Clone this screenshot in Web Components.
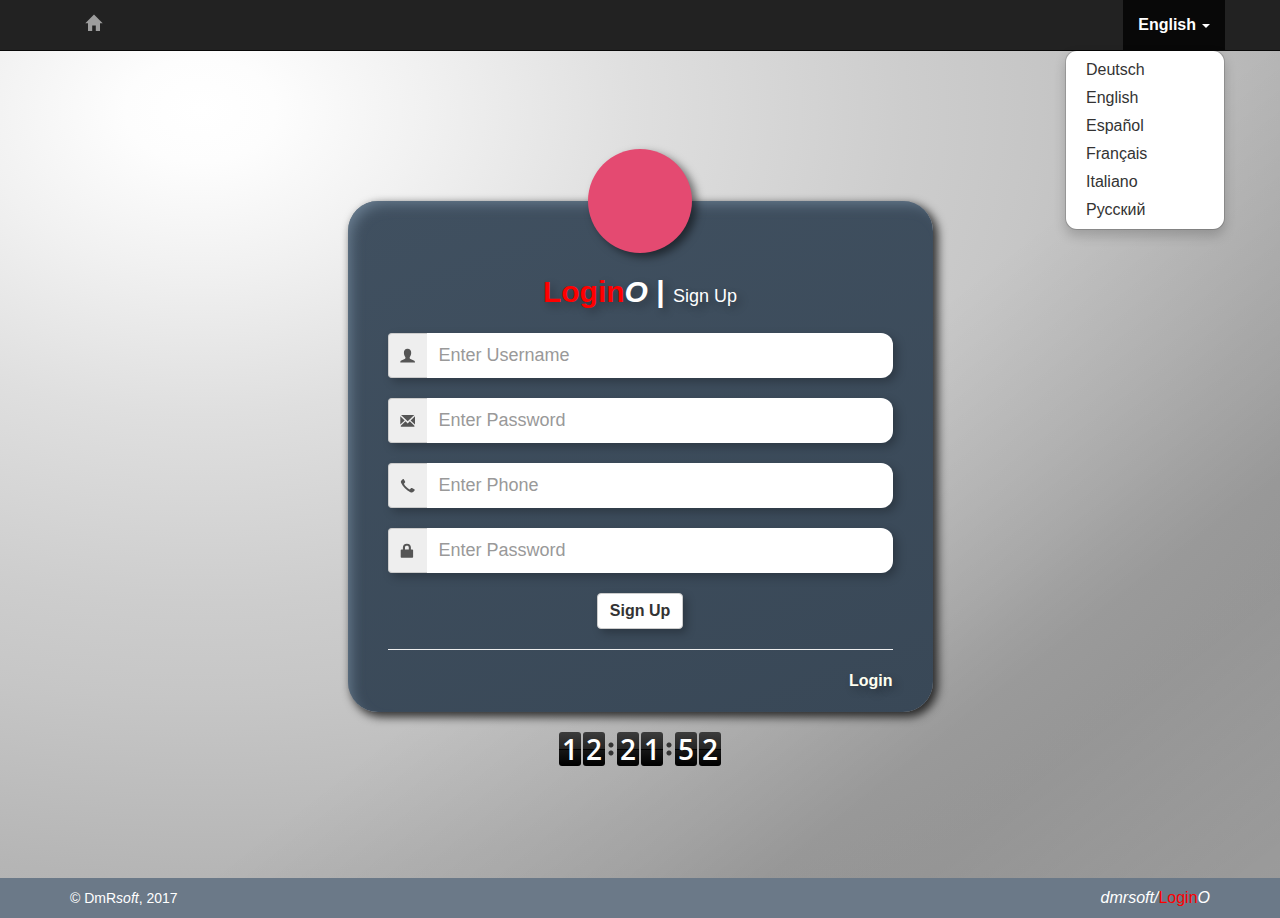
<!DOCTYPE html>
<html lang="en">
<head>
<meta charset="utf-8">
<meta name="viewport" content="width=device-width, initial-scale=1">
<title>LoginO | Sign Up</title>
<style>
body { margin: 0; font: 16px/22px "Liberation Sans", Arial, sans-serif; color: #333; }
</style>
</head>
<body>
<login-app></login-app>

<template id="t-app">
<style>
:host {
  display: flex; flex-direction: column; min-height: 100vh;
  background:
    linear-gradient(142deg, transparent 54%, rgba(0,0,0,.06) 66%, rgba(0,0,0,.09) 71%, rgba(0,0,0,.14) 77%, rgba(0,0,0,.14) 83%, rgba(0,0,0,.07) 97%),
    radial-gradient(ellipse 1500px 1050px at 200px 110px, #fff 0, #fdfdfd 5%, #f1f1f1 15%, #dfdfdf 29%, #d7d7d7 37%, #cdcdcd 47%, #c6c6c6 56%, #bbb 67%, #b5b5b5 73%, #a6a6a6 100%);
}
main { flex: 1; display: flex; flex-direction: column; align-items: center; gap: 20px; padding: 150px 15px 40px; }
</style>
<nav-bar>
  <language-menu></language-menu>
</nav-bar>
<main>
  <signup-card>
    <icon-field icon="user" name="username" placeholder="Enter Username"></icon-field>
    <icon-field icon="envelope" name="email" placeholder="Enter Password"></icon-field>
    <icon-field icon="phone" name="phone" placeholder="Enter Phone"></icon-field>
    <icon-field icon="lock" name="password" type="password" placeholder="Enter Password"></icon-field>
  </signup-card>
  <flip-clock time="12:21:52"></flip-clock>
</main>
<page-footer></page-footer>
</template>

<template id="t-nav">
<style>
:host { display: block; background: #222; border-bottom: 1px solid #080808; }
nav { box-sizing: border-box; max-width: 1170px; margin: 0 auto; padding-left: 15px; display: flex; justify-content: space-between; height: 50px; }
a { display: block; padding: 14px 15px; color: #9d9d9d; }
svg { display: block; width: 18px; height: 18px; fill: currentColor; }
</style>
<nav>
  <a href="#" aria-label="Home"><svg viewBox="0 0 18 18"><path d="M9 .5 17.7 9.2H15V17H10.800V11.500H7.200V17H3V9.200H.3Z"/></svg></a>
  <slot></slot>
</nav>
</template>

<template id="t-lang">
<style>
:host { display: block; position: relative; }
button { display: flex; align-items: center; gap: 6px; height: 50px; padding: 0 15px; border: 0; background: #080808; color: #fff; font: bold 16px/22px "Liberation Sans", Arial, sans-serif; }
i { border: 4px solid transparent; border-top-color: #fff; border-bottom: 0; margin-top: 2px; }
ul { position: absolute; top: 100%; right: 0; box-sizing: border-box; min-width: 160px; margin: 0; padding: 5px 0; list-style: none; background: #fff padding-box; border: 1px solid rgba(0,0,0,.15); border-radius: 12px; box-shadow: 0 6px 12px rgba(0,0,0,.18); }
a { display: block; padding: 3px 20px; color: #333; text-decoration: none; }
</style>
<button type="button" aria-expanded="true">English<i></i></button>
<ul>
  <li><a href="#de">Deutsch</a></li>
  <li><a href="#en">English</a></li>
  <li><a href="#es">Español</a></li>
  <li><a href="#fr">Français</a></li>
  <li><a href="#it">Italiano</a></li>
  <li><a href="#ru">Русский</a></li>
</ul>
</template>

<template id="t-card">
<style>
:host {
  display: block; position: relative; box-sizing: border-box; width: 100%; max-width: 585px; padding: 74px 40px 20px;
  border-radius: 30px; background: linear-gradient(160deg, #405060, #394857);
  box-shadow: 4px 4px 10px 1px rgba(0,0,0,.75), inset 8px 8px 14px -6px #6b7f92;
}
.avatar { position: absolute; top: -52px; left: calc(50% - 52px); width: 104px; height: 104px; border-radius: 50%; background: #e44a71; box-shadow: 5px 4px 8px rgba(0,0,0,.5); }
h1 { margin: 0 0 20px; font-size: 30px; line-height: 33px; text-align: center; color: #fff; text-shadow: 4px 4px 8px rgba(0,0,0,.3); }
h1 b { color: red; }
h1 small { font-size: 18px; font-weight: normal; }
form { display: flex; flex-direction: column; gap: 20px; }
button { align-self: center; height: 36px; padding: 0 12px; border: 1px solid #ccc; border-radius: 4px; background: #fff; color: #333; font: bold 16px/22px "Liberation Sans", Arial, sans-serif; box-shadow: 4px 4px 8px rgba(0,0,0,.25); }
footer { margin-top: 20px; padding-top: 20px; border-top: 1px solid #eee; text-align: right; }
footer a { color: ivory; font-weight: bold; text-decoration: none; text-shadow: 4px 4px 8px rgba(0,0,0,.3); }
</style>
<div class="avatar"></div>
<h1><b>Login</b><em>O</em> | <small>Sign Up</small></h1>
<form>
  <slot></slot>
  <button type="button">Sign Up</button>
</form>
<footer><a href="#login">Login</a></footer>
</template>

<template id="t-field">
<style>
:host { display: flex; height: 45px; border-radius: 4px 12px 12px 4px; box-shadow: 4px 4px 10px rgba(0,0,0,.25); }
label { box-sizing: border-box; width: 39px; display: flex; align-items: center; justify-content: center; background: #eee; border: 1px solid #ccc; border-right: 0; border-radius: 4px 0 0 4px; }
svg { display: block; width: 16px; height: 16px; fill: #555; }
input { flex: 1; min-width: 0; box-sizing: border-box; padding: 0 12px; border: 0; outline: 0; border-radius: 0 12px 12px 0; background: #fff; color: #555; font: 18px "Liberation Sans", Arial, sans-serif; }
input::placeholder { color: #999; opacity: 1; }
</style>
<label for="f"><svg viewBox="0 0 16 16" aria-hidden="true"><path/></svg></label><input id="f">
</template>

<template id="t-clock">
<style>
:host { display: flex; gap: 2px; height: 34px; }
span { width: 22px; border-radius: 3px; text-align: center; color: #fff; font: 600 28px/35px "Open Sans", "Noto Sans", sans-serif; background: linear-gradient(#3c3c3c, #242424 49%, #000 50%, #000 53%, #151515 54%, #000); }
i { width: 8px; background: radial-gradient(circle at 4px 13px, #333 2px, transparent 3px), radial-gradient(circle at 4px 21px, #333 2px, transparent 3px); }
</style>
</template>

<template id="t-foot">
<style>
:host { display: block; background: #6b7988; color: #fff; }
div { box-sizing: border-box; max-width: 1170px; height: 40px; margin: 0 auto; padding: 0 15px; display: flex; justify-content: space-between; align-items: center; }
small { font-size: 14px; }
a { color: #fff; font-style: italic; text-decoration: none; }
b { color: red; font-weight: normal; font-style: normal; }
</style>
<div><small>© DmR<em>soft</em>, 2017</small><a href="#home">dmrsoft/<b>Login</b>O</a></div>
</template>

<script>
class Base extends HTMLElement {
  constructor() {
    super();
    const t = document.getElementById(this.constructor.template);
    this.attachShadow({ mode: "open" }).append(document.importNode(t.content, true));
  }
}
class LanguageMenu extends Base {
  static template = "t-lang";
  connectedCallback() {
    const button = this.shadowRoot.querySelector("button");
    const list = this.shadowRoot.querySelector("ul");
    button.onclick = () => {
      list.hidden = !list.hidden;
      list.style.display = list.hidden ? "none" : "";
      button.setAttribute("aria-expanded", String(!list.hidden));
    };
  }
}
const ICONS = {
  user: "M7.500 .7C10 .7 11.300 2.400 11.200 4.900C11.100 6.700 10.500 8 9.800 8.900C9.500 9.900 9.700 10.700 10.500 11L13.800 12.500C14.600 12.900 15 13.300 15 14.500H.3C.3 13.300 .5 12.900 1.300 12.500L4.600 11C5.400 10.700 5.600 9.900 5.300 8.900C4.600 8 4 6.700 3.900 4.900C3.800 2.400 5 .7 7.500 .7Z",
  envelope: "M1 2H14.300L7.700 8.300ZM.3 3.300 4.700 7.400.3 11.600ZM15 3.300 10.600 7.400 15 11.600ZM5.500 8.300 7.700 10.500 9.800 8.300 14.400 12.800V13.800H.8V12.800Z",
  phone: "M1.200 2.800 2.700 1.200C3.100 .8 3.600 .9 3.900 1.400L5.100 3.600C5.300 4.100 5.200 4.500 4.800 4.800L3.900 5.700C4.900 7.900 7.600 10.500 9.800 11.400L10.900 10.200C11.200 9.900 11.500 9.800 12 10L14.300 11.300C14.800 11.600 14.900 12.100 14.600 12.500L13.100 14.100C12.500 14.700 11.400 14.700 10.400 14.200C6.500 12.500 2.800 8.800 1.200 5.100C.9 4.300 .7 3.400 1.200 2.800Z",
  lock: "M.7 7.200C.7 6.700 1 6.400 1.500 6.400H2.900V4.600C2.900 2.100 4.300 .7 6.900 .7S10.900 2.100 10.900 4.600V6.400H12.300C12.800 6.400 13.100 6.700 13.100 7.200V14C13.100 14.500 12.800 14.800 12.300 14.800H1.500C1 14.800 .7 14.500 .7 14ZM5 6.400H8.800V4.600C8.800 3.300 8.300 2.700 6.900 2.700S5 3.300 5 4.600Z"
};
class IconField extends Base {
  static template = "t-field";
  connectedCallback() {
    const input = this.shadowRoot.querySelector("input");
    input.type = this.getAttribute("type") || "text";
    input.name = this.getAttribute("name");
    input.placeholder = this.getAttribute("placeholder");
    input.setAttribute("aria-label", input.placeholder);
    this.shadowRoot.querySelector("path").setAttribute("d", ICONS[this.getAttribute("icon")]);
  }
}
class FlipClock extends Base {
  static template = "t-clock";
  connectedCallback() {
    for (const ch of this.getAttribute("time")) {
      const el = document.createElement(ch === ":" ? "i" : "span");
      if (ch !== ":") el.textContent = ch;
      this.shadowRoot.append(el);
    }
  }
}
customElements.define("nav-bar", class extends Base { static template = "t-nav"; });
customElements.define("language-menu", LanguageMenu);
customElements.define("icon-field", IconField);
customElements.define("signup-card", class extends Base { static template = "t-card"; });
customElements.define("flip-clock", FlipClock);
customElements.define("page-footer", class extends Base { static template = "t-foot"; });
customElements.define("login-app", class extends Base { static template = "t-app"; });
</script>
</body>
</html>
